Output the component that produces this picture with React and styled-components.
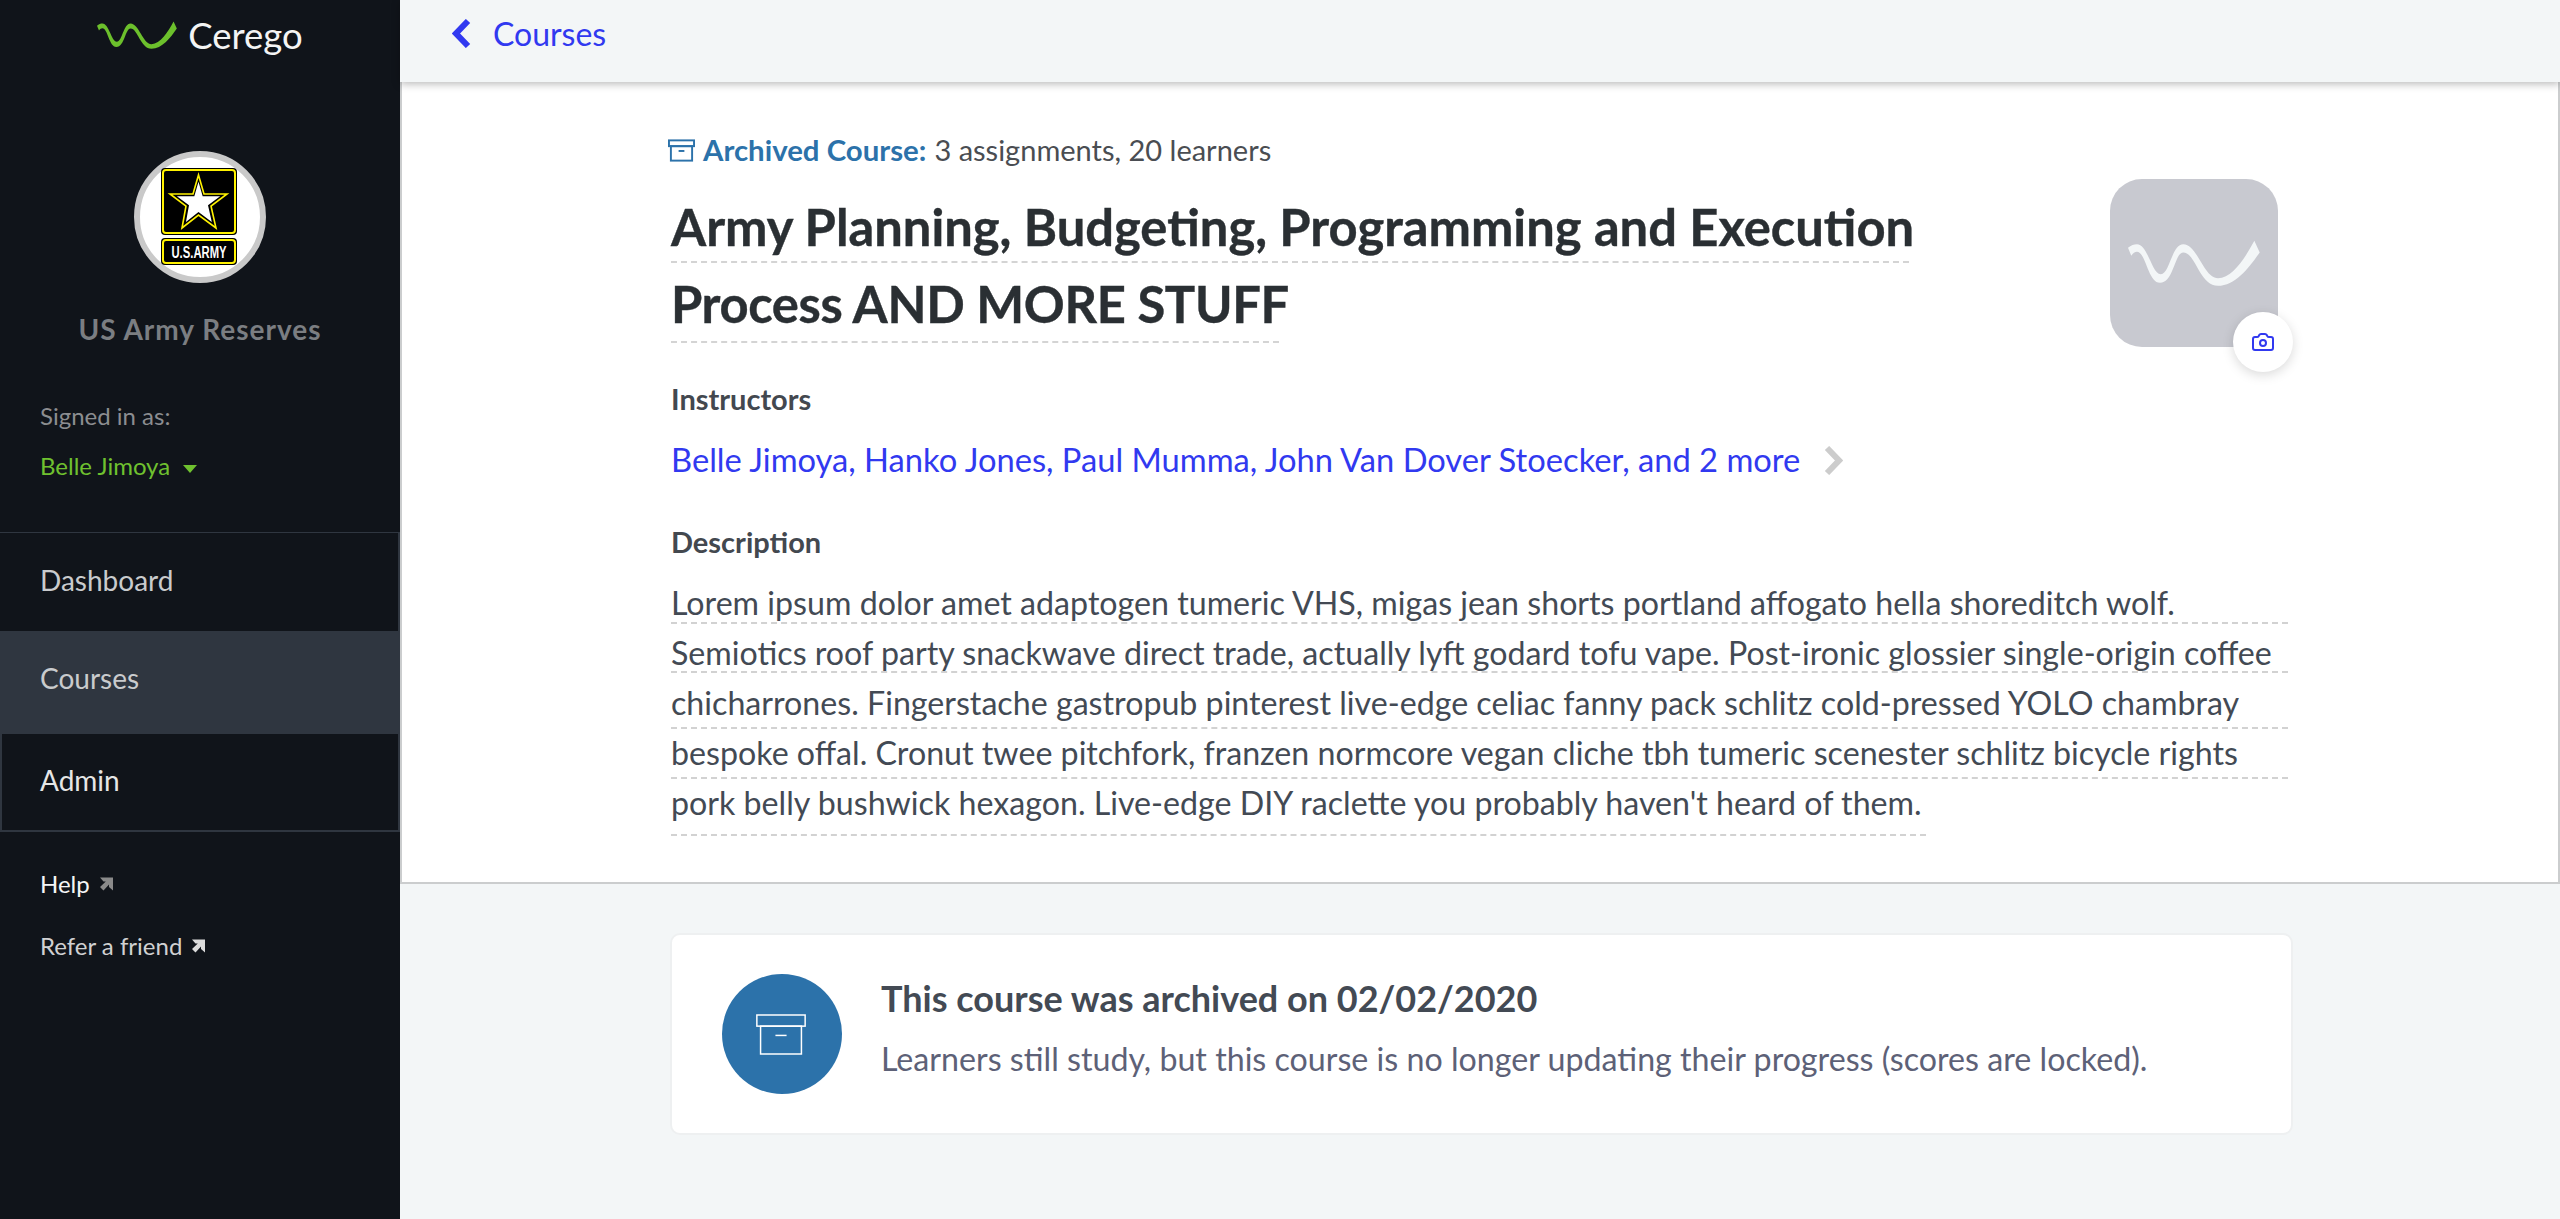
import styled, { createGlobalStyle } from "styled-components"
import { Camera } from "lucide-react"

const GlobalStyle = createGlobalStyle`
    html, body {
        margin: 0;
        padding: 0;
        height: 100%;
        background: #f3f6f7;
        overflow: hidden;
        font-family: 'Lato', 'Liberation Sans', sans-serif;
    }
    * {
        box-sizing: border-box;
    }
`

const WAVE = "M0 7.7 C3 5 6 4 9 4 C20 4 24 34.3 33 34.3 C42 34.3 44 4 55.7 4 C70 4 76 38.3 90.7 38.3 C105 38.3 118 18 127.3 0.7 L132.7 12.3 C122 28 108 46 90.7 46 C72 46 68 12.3 55.7 12.3 C47 12.3 46 43 32.3 43 C20 43 18 11.7 9 11.7 C7 11.7 5 13 3.3 15.7 Z"
const STAR = "38.5,9 44,28 67,28 51,40 56,62 38.5,49 22,62 26,40 10,28 33,28"

function Wave({ width, height, color }) {
    return (
        <svg width={width} height={height} viewBox="0 0 133 46">
            <path d={WAVE} fill={color} />
        </svg>
    )
}

function ArchiveIcon({ width, height, color, strokeWidth }) {
    return (
        <svg width={width} height={height} viewBox="0 0 28 23" fill="none" stroke={color} strokeWidth={strokeWidth}>
            <rect x="1" y="1" width="26" height="6" />
            <rect x="3" y="7" width="22" height="15" />
            <path d="M11 12 H17" />
        </svg>
    )
}

function ArmyLogo() {
    return (
        <svg width="80" height="102" viewBox="0 0 80 102" overflow="visible">
            <rect x="1" y="2" width="76" height="67" rx="4" fill="#000" />
            <rect x="3" y="4" width="72" height="63" rx="3" fill="none" stroke="#fff200" strokeWidth="2" />
            <polygon points={STAR} fill="#000" stroke="#fff200" strokeWidth="1.6" />
            <polygon points={STAR} fill="#fff" transform="translate(38.5 37) scale(0.76) translate(-38.5 -37)" />
            <rect x="1" y="72" width="76" height="27" rx="4" fill="#000" />
            <rect x="3" y="74" width="72" height="23" rx="3" fill="none" stroke="#fff200" strokeWidth="2" />
            <text x="39" y="91.5" textAnchor="middle" fontFamily="'Liberation Sans', sans-serif" fontWeight="700" fontSize="16.5" textLength="55" lengthAdjust="spacingAndGlyphs" fill="#fff">U.S.ARMY</text>
        </svg>
    )
}

function ExternalArrow({ color }) {
    return (
        <svg width="15" height="15" viewBox="0 0 15 15">
            <path d="M1 0.5 H14 V13.5 L10 10 V7.5 L4.5 13.5 L1 10 L6.8 4.5 H4.5 Z" fill={color} />
        </svg>
    )
}

function Chevron({ color, flip }) {
    return (
        <svg width="19" height="29" viewBox="0 0 19 29" fill="none">
            <path d={flip ? "M16 2 L4 14.5 L16 27" : "M3 2 L15 14.5 L3 27"} stroke={color} strokeWidth="6" />
        </svg>
    )
}

export default function App() {
    const description = [
        { text: "Lorem ipsum dolor amet adaptogen tumeric VHS, migas jean shorts portland affogato hella shoreditch wolf.", drop: 0 },
        { text: "Semiotics roof party snackwave direct trade, actually lyft godard tofu vape. Post-ironic glossier single-origin coffee", drop: -1 },
        { text: "chicharrones. Fingerstache gastropub pinterest live-edge celiac fanny pack schlitz cold-pressed YOLO chambray", drop: 5 },
        { text: "bespoke offal. Cronut twee pitchfork, franzen normcore vegan cliche tbh tumeric scenester schlitz bicycle rights", drop: 5 },
        { text: "pork belly bushwick hexagon. Live-edge DIY raclette you probably haven't heard of them.", drop: 12, width: "1255px" },
    ]

    return (
        <Page>
            <GlobalStyle />
            <Sidebar>
                <Logo>
                    <Wave width={80} height={28} color="#6cc02c" />
                    <LogoName>Cerego</LogoName>
                </Logo>
                <Avatar>
                    <ArmyLogo />
                </Avatar>
                <OrgName>US Army Reserves</OrgName>
                <SignedIn>
                    <SignedLabel>Signed in as:</SignedLabel>
                    <UserName>
                        Belle Jimoya
                        <Caret />
                    </UserName>
                </SignedIn>
                <Nav>
                    <NavItem $first>Dashboard</NavItem>
                    <NavItem $active>Courses</NavItem>
                    <NavItem $boxed>Admin</NavItem>
                </Nav>
                <SideLinks>
                    <SideLink $bright>Help <ExternalArrow color="#8a8a8a" /></SideLink>
                    <SideLink>Refer a friend <ExternalArrow color="#dcdcdc" /></SideLink>
                </SideLinks>
            </Sidebar>

            <Main>
                <TopBar>
                    <BackLink>
                        <Chevron color="#3139f0" flip />
                        Courses
                    </BackLink>
                </TopBar>

                <Details>
                    <Column>
                        <Status>
                            <ArchiveIcon width={27} height={23} color="#2c72aa" strokeWidth={2} />
                            <StatusLabel>Archived Course:</StatusLabel>
                            <span>3 assignments, 20 learners</span>
                        </Status>

                        <TitleRow>
                            <Title>
                                <TitleLine $width="1238px" $drop={3}>Army Planning, Budgeting, Programming and Execution</TitleLine>
                                <TitleLine $width="608px" $drop={6} $spacing={-0.36}>Process AND MORE STUFF</TitleLine>
                            </Title>
                            <CourseImage>
                                <Wave width={132} height={46} color="#f3f6f7" />
                                <CameraButton>
                                    <Camera size={24} color="#3139f0" strokeWidth={2} />
                                </CameraButton>
                            </CourseImage>
                        </TitleRow>

                        <Label $top={30}>Instructors</Label>
                        <Instructors>
                            <InstructorLink>Belle Jimoya, Hanko Jones, Paul Mumma, John Van Dover Stoecker, and 2 more</InstructorLink>
                            <Chevron color="#cccccc" />
                        </Instructors>

                        <Label $top={47}>Description</Label>
                        <Description>
                            {description.map(line => (
                                <DescriptionLine key={line.text} $drop={line.drop} $width={line.width}>{line.text}</DescriptionLine>
                            ))}
                        </Description>
                    </Column>
                </Details>

                <Notice>
                    <NoticeCircle>
                        <ArchiveIcon width={52} height={43} color="#ffffff" strokeWidth={0.8} />
                    </NoticeCircle>
                    <NoticeBody>
                        <NoticeTitle>This course was archived on 02/02/2020</NoticeTitle>
                        <NoticeText>Learners still study, but this course is no longer updating their progress (scores are locked).</NoticeText>
                    </NoticeBody>
                </Notice>
            </Main>
        </Page>
    )
}

const Page = styled.div`
    display: flex;
    height: 1219px;
    overflow: hidden;
`

const Sidebar = styled.aside`
    width: 400px;
    flex-shrink: 0;
    background: #10141a;
    display: flex;
    flex-direction: column;
`

const Logo = styled.div`
    display: flex;
    align-items: center;
    justify-content: center;
    gap: 11px;
    height: 70px;
`

const LogoName = styled.span`
    font-size: 36.5px;
    color: #f4f4f4;
    line-height: 1;
`

const Avatar = styled.div`
    width: 132px;
    height: 132px;
    margin: 81px auto 0;
    border-radius: 50%;
    background: #fff;
    border: 6px solid #c9c9c9;
    display: flex;
    align-items: center;
    justify-content: center;
`

const OrgName = styled.div`
    margin-top: 29px;
    text-align: center;
    font-size: 28px;
    font-weight: 700;
    letter-spacing: 1px;
    color: #7b7e82;
    line-height: 34px;
`

const SignedIn = styled.div`
    margin-top: 55px;
    padding-left: 40px;
`

const SignedLabel = styled.div`
    font-size: 24px;
    line-height: 30px;
    color: #8b8d90;
`

const UserName = styled.div`
    margin-top: 20px;
    display: flex;
    align-items: center;
    gap: 13px;
    font-size: 24px;
    line-height: 30px;
    color: #6fc12f;
`

const Caret = styled.span`
    width: 0;
    height: 0;
    margin-top: 6px;
    border-left: 7px solid transparent;
    border-right: 7px solid transparent;
    border-top: 8px solid #6fc12f;
`

const Nav = styled.nav`
    margin-top: 51px;
    display: flex;
    flex-direction: column;
`

const NavItem = styled.div`
    display: flex;
    align-items: center;
    padding-left: ${p => (p.$boxed ? "38px" : "40px")};
    padding-bottom: ${p => (p.$active ? "9px" : "5px")};
    font-size: 28px;
    height: ${p => (p.$active ? "103px" : p.$boxed ? "98px" : "99px")};
    background: ${p => (p.$active ? "#2f3640" : "transparent")};
    color: ${p => (p.$boxed ? "#e6e6e6" : "#c9cbcd")};
    border-top: ${p => (p.$first ? "1px solid #2f3640" : "none")};
    border-right: ${p => (p.$active ? "none" : "2px solid #2f3640")};
    border-left: ${p => (p.$boxed ? "2px solid #2f3640" : "none")};
    border-bottom: ${p => (p.$boxed ? "2px solid #2f3640" : "none")};
`

const SideLinks = styled.div`
    margin-top: 37px;
    padding-left: 40px;
    display: flex;
    flex-direction: column;
    gap: 32px;
`

const SideLink = styled.div`
    display: flex;
    align-items: center;
    gap: 9px;
    font-size: 24px;
    line-height: 30px;
    color: ${p => (p.$bright ? "#f4f5f6" : "#d0d1d2")};
`

const Main = styled.main`
    flex: 1;
    min-width: 0;
    display: flex;
    flex-direction: column;
`

const TopBar = styled.header`
    position: relative;
    height: 82px;
    flex-shrink: 0;
    background: #f3f6f7;
    box-shadow: 0 2px 8px rgba(0, 0, 0, 0.28);
    padding-left: 52px;
    display: flex;
    align-items: center;
`

const BackLink = styled.a`
    display: flex;
    align-items: center;
    gap: 22px;
    margin-top: -16px;
    font-size: 32px;
    color: #3139f0;
`

const Details = styled.section`
    height: 802px;
    flex-shrink: 0;
    background: #fff;
    border: 2px solid #cbcdce;
    border-top: none;
`

const Column = styled.div`
    width: 1622px;
    margin-left: 269px;
    padding-top: 52px;
`

const Status = styled.div`
    display: flex;
    align-items: center;
    gap: 8px;
    margin-left: -3px;
    font-size: 29px;
    line-height: 32px;
    color: #4a4d52;
`

const StatusLabel = styled.strong`
    font-size: 29.4px;
    font-weight: 700;
    color: #2c72aa;
`

const TitleRow = styled.div`
    display: flex;
    justify-content: space-between;
`

const Title = styled.h1`
    margin: 30px 0 0;
    font-size: 50.7px;
    font-weight: 700;
    color: #2a2f33;
    -webkit-text-stroke: 0.4px #2a2f33;
`

const TitleLine = styled.div`
    width: ${p => p.$width};
    line-height: 62px;
    white-space: nowrap;
    letter-spacing: ${p => p.$spacing || 0}px;
    margin-bottom: 10px;
    height: ${p => 64 + p.$drop}px;
    border-bottom: 2px dashed #d4d4d4;
`

const CourseImage = styled.div`
    position: relative;
    width: 168px;
    height: 168px;
    margin: 13px 15px 0 0;
    border-radius: 32px;
    background: #c8c9d0;
    display: flex;
    align-items: center;
    justify-content: center;
`

const CameraButton = styled.div`
    position: absolute;
    right: -15px;
    bottom: -25px;
    width: 60px;
    height: 60px;
    border-radius: 50%;
    background: #fff;
    box-shadow: 0 3px 12px rgba(0, 0, 0, 0.15);
    display: flex;
    align-items: center;
    justify-content: center;
`

const Label = styled.div`
    margin-top: ${p => p.$top}px;
    font-size: 29px;
    line-height: 32px;
    font-weight: 700;
    color: #43484f;
`

const Instructors = styled.div`
    margin-top: 26px;
    display: flex;
    align-items: center;
    gap: 24px;
`

const InstructorLink = styled.a`
    font-size: 32.7px;
    line-height: 38px;
    color: #3139f0;
`

const Description = styled.div`
    margin-top: 20px;
    font-size: 32.18px;
    color: #434a54;
`

const DescriptionLine = styled.div`
    width: ${p => p.$width || "1617px"};
    height: ${p => 46 + p.$drop}px;
    line-height: 50px;
    white-space: nowrap;
    margin-bottom: ${p => 4 - p.$drop}px;
    border-bottom: 2px dashed #d2d2d2;
`

const Notice = styled.div`
    width: 1623px;
    height: 202px;
    margin: 49px 0 0 270px;
    padding-left: 50px;
    background: #fff;
    border: 2px solid #eef0f1;
    border-radius: 10px;
    display: flex;
    align-items: center;
    gap: 39px;
`

const NoticeCircle = styled.div`
    width: 120px;
    height: 120px;
    padding: 0 3px 0 0;
    border-radius: 50%;
    background: #2c72aa;
    display: flex;
    align-items: center;
    justify-content: center;
`

const NoticeBody = styled.div`
    padding-bottom: 12px;
`

const NoticeTitle = styled.div`
    font-size: 36px;
    line-height: 40px;
    font-weight: 700;
    color: #434a54;
`

const NoticeText = styled.div`
    margin-top: 21px;
    font-size: 32.2px;
    line-height: 40px;
    color: #5d6177;
`
